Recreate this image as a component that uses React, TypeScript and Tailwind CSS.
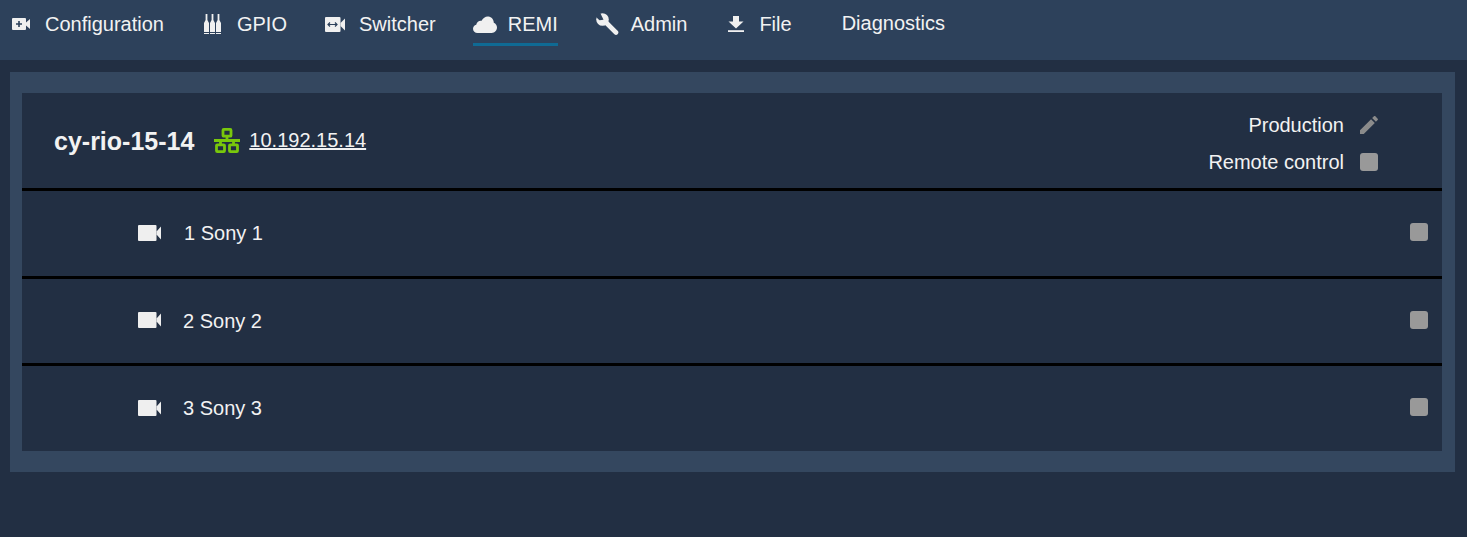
import React from "react";

const NAV = "#2d415b";

function CamPlus() {
  return (
    <svg width="18" height="12" viewBox="0 0 18 12" className="block">
      <rect x="0" y="0" width="14" height="12" rx="1" fill="#f0f0f0" />
      <path d="M14 4.500 18 1v10l-4-3.500z" fill="#f0f0f0" />
      <path d="M7 3v6M4 6h6" stroke={NAV} strokeWidth="1.600" />
    </svg>
  );
}

function Bullets() {
  const b = (x: number) => (
    <g key={x} fill="#f0f0f0">
      <path d={`M${x + 1.6} 0h1.800v6l1.600 3v9h-5V9l1.600-3z`} />
      <rect x={x} y="19" width="5" height="1" />
    </g>
  );
  return (
    <svg width="17" height="20" viewBox="0 0 17 20" className="block">
      {b(0)}
      {b(6)}
      {b(12)}
    </svg>
  );
}

function CamSwitch() {
  return (
    <svg width="20" height="15" viewBox="0 0 20 15" className="block">
      <rect x="0" y="0" width="15.500" height="15" rx="1" fill="#f0f0f0" />
      <path d="M15.500 6 20 1.500v12L15.500 9z" fill="#f0f0f0" />
      <path d="M3 7.500h9M5 5.500l-2 2 2 2M10 5.500l2 2-2 2" stroke={NAV} strokeWidth="1.200" fill="none" />
    </svg>
  );
}

function Cloud() {
  return (
    <svg width="24" height="17" viewBox="0 0 24 17" className="block">
      <path
        d="M4.500 17C2 17 0 15.200 0 12.800c0-2 1.300-3.600 3.200-4.100C4 5.600 6.400 4.200 8.600 4.800 10 2 12.600.2 15.400.5c3.200.4 5.300 3 5.400 6.300 2 .8 3.200 2.600 3.200 4.800 0 3-2.400 5.400-5.300 5.400z"
        fill="#f0f0f0"
      />
    </svg>
  );
}

function Wrench() {
  return (
    <svg width="23" height="22" viewBox="0 0 23 22" className="block">
      <path d="M9 8.500 20 19.500" stroke="#f0f0f0" strokeWidth="4.600" strokeLinecap="round" />
      <circle cx="6.500" cy="6.500" r="6.300" fill="#f0f0f0" />
      <path d="M7.500 6.800 3.800-1H-1v4l4.500 4.200z" fill={NAV} />
    </svg>
  );
}

function Download() {
  return (
    <svg width="16" height="16" viewBox="0 0 16 16" className="block">
      <path d="M5 0h6v5.500h4.500L8 12.500 .5 5.500H5z" fill="#f0f0f0" />
      <rect x="0" y="14.200" width="16" height="1.800" fill="#f0f0f0" />
    </svg>
  );
}

function Camera() {
  return (
    <svg width="23" height="16" viewBox="0 0 23 16" className="block shrink-0 -mt-[1px]">
      <rect x="0" y="0" width="18.500" height="16" rx="1" fill="#efefef" />
      <path d="M18.500 6.500 23 1.500v13L18.500 9.500z" fill="#efefef" />
    </svg>
  );
}

function Network() {
  return (
    <svg width="26" height="25" viewBox="0 0 26 25" className="block shrink-0" fill="none" stroke="#79c80c" strokeWidth="2.800">
      <rect x="9" y="1.400" width="8" height="6.800" rx="0.800" />
      <rect x="2.500" y="16.800" width="8" height="6.800" rx="0.800" />
      <rect x="15.500" y="16.800" width="8" height="6.800" rx="0.800" />
      <path d="M13 8v4.500M0 12.500h26M6.500 12.500v4.300M19.500 12.500v4.300" />
    </svg>
  );
}

function Pencil() {
  return (
    <svg width="24" height="24" viewBox="0 0 24 24" className="block -mx-[3px]" fill="#8b8b8b">
      <path d="M3 17.250V21h3.750L17.810 9.940l-3.750-3.750L3 17.250zM20.710 7.040c.39-.39.39-1.020 0-1.410l-2.340-2.340c-.39-.39-1.020-.39-1.410 0l-1.830 1.830 3.750 3.750 1.830-1.830z" />
    </svg>
  );
}

function Check() {
  return <span className="block w-[18px] h-[18px] rounded-[3px] bg-[#999999] shrink-0" />;
}

function Row({ label, textClass }: { label: string; textClass: string }) {
  return (
    <div className="flex items-center h-[87.500px] border-t-[3px] border-black pl-[116px] pr-[14px] last:h-[88px] last:pb-[1px]">
      <Camera />
      <span className={textClass}>{label}</span>
      <span className="ml-auto -mt-[2px]"><Check /></span>
    </div>
  );
}

export default function App() {
  return (
    <div className="min-h-[537px] bg-[#222f43] text-[#f2f2f2] text-[20px] leading-[24px] font-['Liberation_Sans',Arial,sans-serif] overflow-hidden">
      <nav className="flex items-start h-[60px] bg-[#2d415b] pl-[12px]">
        <div className="flex items-center h-[24px] mt-[12px] mr-[40px]">
          <CamPlus />
          <span className="ml-[15px]">Configuration</span>
        </div>
        <div className="flex items-center h-[24px] mt-[12px] mr-[38px]">
          <Bullets />
          <span className="ml-[16px]">GPIO</span>
        </div>
        <div className="flex items-center h-[24px] mt-[12px] mr-[37px]">
          <CamSwitch />
          <span className="ml-[14px]">Switcher</span>
        </div>
        <div className="flex flex-col mt-[12px] mr-[38px]">
          <div className="flex items-center h-[24px]">
            <Cloud />
            <span className="ml-[11px]">REMI</span>
          </div>
          <span className="block h-[3px] mt-[7px] bg-[#0f6a94]" />
        </div>
        <div className="flex items-center h-[24px] mt-[12px] mr-[41px]">
          <Wrench />
          <span className="ml-[12px]">Admin</span>
        </div>
        <div className="flex items-center h-[24px] mt-[12px] mr-[50px]">
          <Download />
          <span className="ml-[15px]">File</span>
        </div>
        <div className="h-[24px] mt-[11px]">Diagnostics</div>
      </nav>

      <section className="mt-[12px] mx-[10px] mr-[12px] bg-[#34475f] px-[12px] pr-[13px] py-[21px]">
        <div className="bg-[#222f43]">
          <header className="flex items-center h-[95px] pl-[32px] pr-[64px]">
            <h1 className="text-[25px] font-bold leading-[28px] mr-[20px]">cy-rio-15-14</h1>
            <Network />
            <a className="underline ml-[9px] -mt-[1px]">10.192.15.14</a>
            <div className="ml-auto grid grid-cols-[auto_18px] gap-x-[16px] gap-y-[13px] items-center justify-items-end mt-[6px]">
              <span>Production</span>
              <Pencil />
              <span>Remote control</span>
              <Check />
            </div>
          </header>
          <Row label="1 Sony 1" textClass="ml-[23px]" />
          <Row label="2 Sony 2" textClass="ml-[22px]" />
          <Row label="3 Sony 3" textClass="ml-[22px]" />
        </div>
      </section>
    </div>
  );
}
